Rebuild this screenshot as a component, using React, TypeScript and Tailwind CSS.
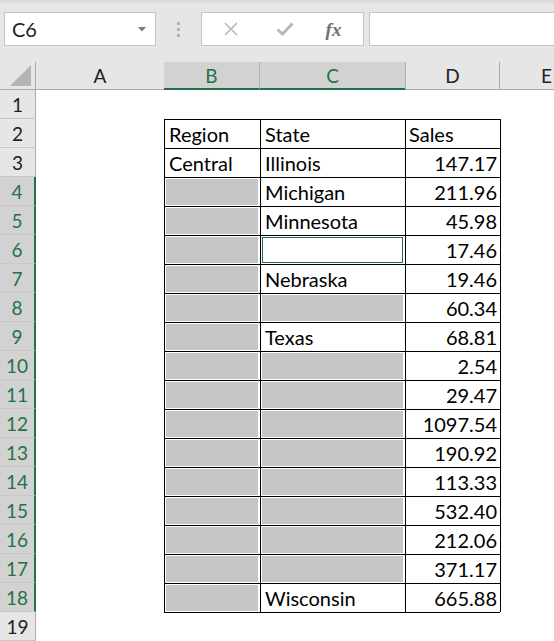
import React from "react";

type Cell = { t?: string; sel?: boolean; active?: boolean };

const rows: { b: Cell; c: Cell; d: string }[] = [
  { b: { t: "Region" }, c: { t: "State" }, d: "Sales" },
  { b: { t: "Central" }, c: { t: "Illinois" }, d: "147.17" },
  { b: { sel: true }, c: { t: "Michigan" }, d: "211.96" },
  { b: { sel: true }, c: { t: "Minnesota" }, d: "45.98" },
  { b: { sel: true }, c: { active: true }, d: "17.46" },
  { b: { sel: true }, c: { t: "Nebraska" }, d: "19.46" },
  { b: { sel: true }, c: { sel: true }, d: "60.34" },
  { b: { sel: true }, c: { t: "Texas" }, d: "68.81" },
  { b: { sel: true }, c: { sel: true }, d: "2.54" },
  { b: { sel: true }, c: { sel: true }, d: "29.47" },
  { b: { sel: true }, c: { sel: true }, d: "1097.54" },
  { b: { sel: true }, c: { sel: true }, d: "190.92" },
  { b: { sel: true }, c: { sel: true }, d: "113.33" },
  { b: { sel: true }, c: { sel: true }, d: "532.40" },
  { b: { sel: true }, c: { sel: true }, d: "212.06" },
  { b: { sel: true }, c: { sel: true }, d: "371.17" },
  { b: { sel: true }, c: { t: "Wisconsin" }, d: "665.88" },
];

function TableCell({ cell }: { cell: Cell }) {
  const base = "h-[29px] border-t border-l border-black ";
  if (cell.sel) {
    return (
      <div className={base + "p-px pr-[2px]"}>
        <div className="h-full w-full bg-[#c6c6c6]" />
      </div>
    );
  }
  if (cell.active) {
    return (
      <div className={base + "p-px pr-[2px] bg-white"}>
        <div className="h-full w-full border border-[#217346]" />
      </div>
    );
  }
  return (
    <div className={base + "flex items-end pl-[4px] pb-[4px] leading-none bg-white"}>
      <span>{cell.t}</span>
    </div>
  );
}

function RowHeader({ n }: { n: number }) {
  const sel = n >= 4 && n <= 18;
  return (
    <div
      className={
        "h-[29px] flex items-end justify-center pb-[4px] text-[19px] leading-none border-b border-[#c8c8c8] " +
        (sel
          ? "bg-[#d2d2d2] text-[#217346] border-r-2 border-r-[#217346]"
          : "bg-[#e6e6e6] text-[#222] border-r border-r-[#ababab]")
      }
    >
      {n}
    </div>
  );
}

export default function App() {
  const font = { fontFamily: "Lato, 'Open Sans', sans-serif" };
  return (
    <div className="w-[554px] h-[641px] overflow-hidden bg-white text-[20px] text-black" style={font}>
      {/* Formula bar area */}
      <div className="h-[62px] bg-[#e6e6e6] flex flex-col">
        <div className="h-[4px] bg-gradient-to-b from-[#d6d6d6] to-[#e6e6e6]" />
        <div className="flex items-start mt-[8px] pl-[4px]">
          <div className="w-[152px] h-[34px] bg-white border border-[#c6c6c6] flex items-center pl-[7px] pr-[9px] justify-between">
            <span className="text-[20px] text-[#222] leading-none">C6</span>
            <svg width="8" height="5" viewBox="0 0 8 5">
              <path d="M0 0 L8 0 L4 4.5 Z" fill="#7a7a7a" />
            </svg>
          </div>
          <div className="w-[45px] h-[34px] flex flex-col items-center justify-center gap-[3px]">
            <div className="w-[3px] h-[3px] bg-[#b4b4b4]" />
            <div className="w-[3px] h-[3px] bg-[#b4b4b4]" />
            <div className="w-[3px] h-[3px] bg-[#b4b4b4]" />
          </div>
          <div className="w-[163px] h-[34px] bg-white border border-[#c6c6c6] flex items-center">
            <div className="w-[56px] flex justify-center pl-[2px]">
              <svg width="14" height="14" viewBox="0 0 14 14">
                <path d="M1 1 L13 13 M13 1 L1 13" stroke="#b8b8b8" strokeWidth="1.6" />
              </svg>
            </div>
            <div className="w-[54px] flex justify-center">
              <svg width="18" height="14" viewBox="0 0 18 14">
                <path d="M1.5 7.5 L6.5 12 L16.5 1.5" stroke="#b8b8b8" strokeWidth="3" fill="none" />
              </svg>
            </div>
            <div className="flex-1 flex justify-center pr-[8px]">
              <span
                className="italic font-bold text-[#707070] text-[19px] leading-none"
                style={{ fontFamily: "'Liberation Serif', 'DejaVu Serif', serif" }}
              >
                fx
              </span>
            </div>
          </div>
          <div className="ml-[5px] flex-1 h-[34px] bg-white border border-[#c6c6c6] border-r-0" />
        </div>
      </div>

      {/* Sheet */}
      <div className="grid grid-cols-[36px_128px_96px_145px_95px_1fr]">
        {/* Column headers */}
        <div className="h-[28px] bg-[#e6e6e6] border-r border-b border-[#ababab] flex items-end justify-end pr-[3px] pb-[3px]">
          <svg width="22" height="21" viewBox="0 0 22 21">
            <path d="M21 0 L21 21 L0 21 Z" fill="#b4b4b4" />
          </svg>
        </div>
        <div className="h-[28px] bg-[#e6e6e6] border-b border-[#ababab] flex items-end justify-center pb-[4px] text-[19px] leading-none text-[#222]">
          A
        </div>
        <div className="h-[28px] bg-[#d2d2d2] border-b-2 border-b-[#217346] border-r border-r-[#b4b4b4] flex items-end justify-center pb-[3px] text-[19px] leading-none text-[#217346]">
          B
        </div>
        <div className="h-[28px] bg-[#d2d2d2] border-b-2 border-b-[#217346] flex items-end justify-center pb-[3px] text-[19px] leading-none text-[#217346]">
          C
        </div>
        <div className="h-[28px] bg-[#e6e6e6] border-b border-l border-r border-[#ababab] flex items-end justify-center pb-[4px] text-[19px] leading-none text-[#222]">
          D
        </div>
        <div className="h-[28px] bg-[#e6e6e6] border-b border-[#ababab] flex items-end pl-[41px] pb-[4px] text-[19px] leading-none text-[#222]">
          E
        </div>

        {/* Row 1 */}
        <RowHeader n={1} />
        <div className="h-[29px]" />
        <div className="h-[29px]" />
        <div className="h-[29px]" />
        <div className="h-[29px]" />
        <div className="h-[29px]" />

        {rows.map((r, i) => (
          <React.Fragment key={i}>
            <RowHeader n={i + 2} />
            <div className="h-[29px]" />
            <TableCell cell={r.b} />
            <TableCell cell={r.c} />
            <div className="h-[29px] border-t border-l border-black flex items-end justify-end pr-[3px] pb-[4px] leading-none bg-white">
              {r.d === "Sales" ? <span className="w-full pl-[3px] text-left">Sales</span> : <span>{r.d}</span>}
            </div>
            <div className="h-[29px] border-l border-black" />
          </React.Fragment>
        ))}

        {/* Row 19 */}
        <RowHeader n={19} />
        <div className="h-[29px]" />
        <div className="h-[29px] border-t border-black" />
        <div className="h-[29px] border-t border-black" />
        <div className="h-[29px] border-t border-black" />
        <div className="h-[29px]" />
      </div>
    </div>
  );
}
